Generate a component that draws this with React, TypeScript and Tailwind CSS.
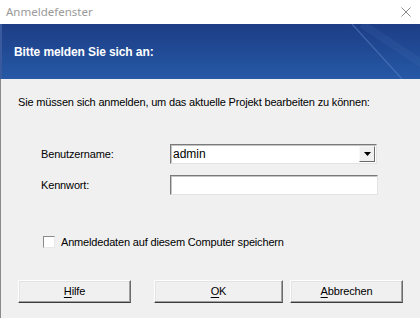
import React from "react";

const Btn = ({ label, k, w }: { label: string; k: string; w: string }) => {
  const i = label.indexOf(k);
  return (
    <button
      className={`${w} h-[23px] bg-[#f0f0f0] border border-t-[#fdfdfd] border-l-[#fdfdfd] border-r-[#6b6b6b] border-b-[#3c3c3c] shadow-[inset_-1px_-1px_0_#a0a0a0,inset_1px_1px_0_#e3e3e3] text-[11px] tracking-[-0.15px] text-black flex items-center justify-center`}
    >
      <span>
        {label.slice(0, i)}
        <span className="underline underline-offset-2">{k}</span>
        {label.slice(i + 1)}
      </span>
    </button>
  );
};

export default function App() {
  return (
    <div
      className="w-[420px] h-[318px] bg-[#f0f0f0] overflow-hidden flex flex-col"
      style={{ fontFamily: '"Liberation Sans", Arial, sans-serif' }}
    >
      <div className="h-[24px] bg-white flex items-center justify-between pl-[6px] pr-[8px] shrink-0">
        <span
          className="text-[11.5px] text-[#9a9a9a]"
          style={{ fontFamily: '"Noto Sans", "Open Sans", sans-serif' }}
        >
          Anmeldefenster
        </span>
        <svg width="10" height="10" viewBox="0 0 10 10" className="mr-[1px]">
          <path d="M0.5 0.5 L9.5 9.5 M9.5 0.5 L0.5 9.5" stroke="#8a8a8a" strokeWidth="1" />
        </svg>
      </div>
      <div className="relative h-[55px] shrink-0 bg-gradient-to-b from-[#1d3d85] to-[#2659a6] border-l-2 border-[#3a5aa0] flex items-center pl-[12px] overflow-hidden">
        <svg className="absolute inset-0" width="420" height="55" viewBox="0 0 420 55">
          <path d="M350 0 L400 55" stroke="#5c85c8" strokeWidth="1.2" opacity="0.55" />
          <path d="M360 0 L420 40" stroke="#4a74ba" strokeWidth="8" opacity="0.15" />
        </svg>
        <span className="relative text-white font-bold text-[12px] tracking-[-0.1px]">
          Bitte melden Sie sich an:
        </span>
      </div>
      <div className="flex-1 border-l border-[#8a8a8a] flex flex-col">
        <p className="text-[11px] tracking-[-0.17px] text-black ml-[17px] mt-[17px] leading-[13px]">
          Sie müssen sich anmelden, um das aktuelle Projekt bearbeiten zu können:
        </p>
        <div className="mt-[35px] ml-[40px] flex flex-col gap-[11px]">
          <div className="flex items-center h-[20px]">
            <span className="text-[11px] tracking-[-0.15px] w-[129px]">Benutzername:</span>
            <div className="w-[207px] h-[20px] bg-white border border-t-[#7a7a7a] border-l-[#7a7a7a] border-r-[#e3e3e3] border-b-[#e3e3e3] shadow-[inset_1px_1px_0_#c4c4c4] flex items-center justify-between pl-[2px] pr-[1px]">
              <span className="text-[12px]">admin</span>
              <div className="w-[16px] h-[16px] bg-[#f0f0f0] border border-t-[#f8f8f8] border-l-[#f8f8f8] border-r-[#6b6b6b] border-b-[#6b6b6b] flex items-center justify-center">
                <svg width="7" height="4" viewBox="0 0 7 4">
                  <path d="M0 0 H7 L3.5 4 Z" fill="#000" />
                </svg>
              </div>
            </div>
          </div>
          <div className="flex items-center h-[20px]">
            <span className="text-[11px] tracking-[-0.15px] w-[129px]">Kennwort:</span>
            <div className="w-[208px] h-[20px] bg-white border border-t-[#7a7a7a] border-l-[#7a7a7a] border-r-[#e3e3e3] border-b-[#e3e3e3] shadow-[inset_1px_1px_0_#c4c4c4]" />
          </div>
        </div>
        <div className="mt-[39px] ml-[42px] flex items-center gap-[6px]">
          <div className="w-[12px] h-[12px] bg-white border border-t-[#8a8a8a] border-l-[#8a8a8a] border-r-[#e8e8e8] border-b-[#e8e8e8]" />
          <span className="text-[11px] tracking-[-0.17px]">Anmeldedaten auf diesem Computer speichern</span>
        </div>
        <div className="mt-[29px] ml-[17px] flex">
          <Btn label="Hilfe" k="H" w="w-[113px]" />
          <div className="ml-[23px]">
            <Btn label="OK" k="O" w="w-[129px]" />
          </div>
          <div className="ml-[7px]">
            <Btn label="Abbrechen" k="A" w="w-[113px]" />
          </div>
        </div>
      </div>
    </div>
  );
}
